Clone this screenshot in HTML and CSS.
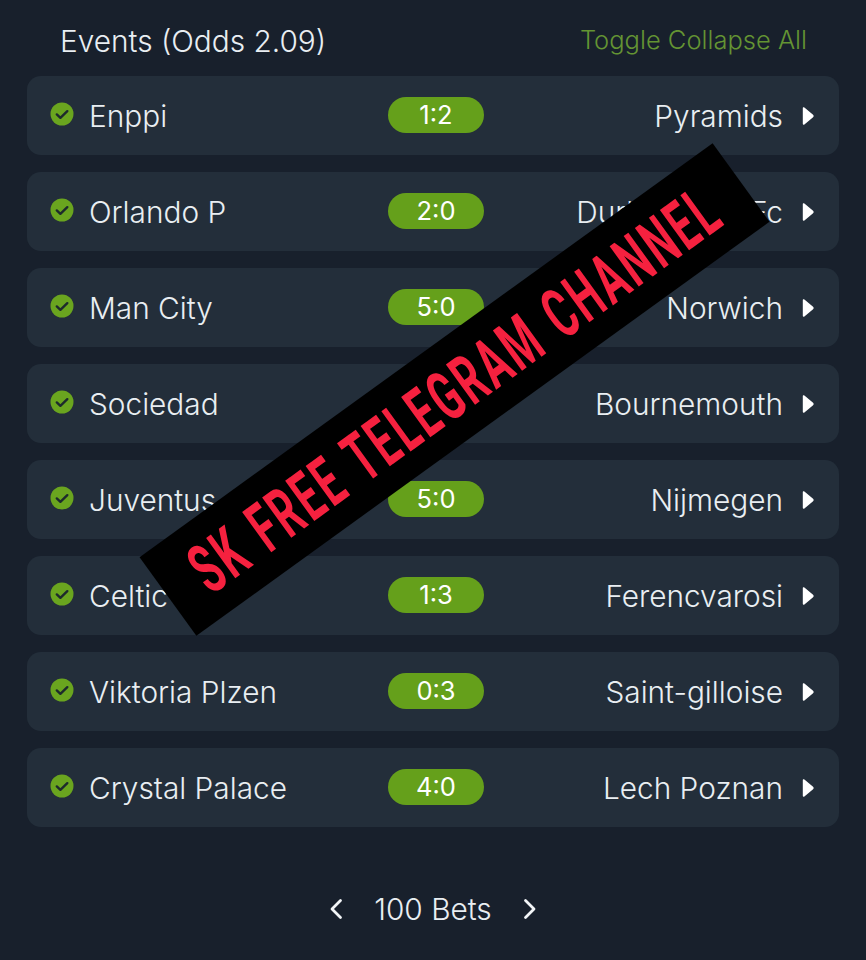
FILE: index.html
```html
<!DOCTYPE html>
<html lang="en">
<head>
    <meta charset="UTF-8">
    <meta name="viewport" content="width=device-width, initial-scale=1.0">
    <title>Events</title>
    <link rel="stylesheet" href="styles.css">
</head>
<body>
    <svg class="sprite" width="0" height="0">
        <symbol id="check" viewBox="0 0 24 24">
            <circle cx="12" cy="12" r="11.5" fill="#6aa51f"/>
            <path d="M6.8 12.4l3.6 3.4 6.9-6.6" fill="none" stroke="#1d2a2c" stroke-width="2.4" stroke-linecap="round" stroke-linejoin="round"/>
        </symbol>
        <symbol id="caret" viewBox="0 0 12 20">
            <path d="M2.4 1.4L10.8 8.6a1.8 1.8 0 0 1 0 2.8L2.4 18.6a1 1 0 0 1-1.6-.8V2.2a1 1 0 0 1 1.6-.8z" fill="#fff"/>
        </symbol>
    </svg>

    <div class="page">
        <header class="head">
            <h1>Events (Odds 2.09)</h1>
            <a class="toggle">Toggle Collapse All</a>
        </header>

        <div class="events">
            <div class="event">
                <svg class="check"><use href="#check"/></svg>
                <span class="home">Enppi</span>
                <span class="score">1:2</span>
                <span class="away">Pyramids</span>
                <svg class="caret"><use href="#caret"/></svg>
            </div>
            <div class="event">
                <svg class="check"><use href="#check"/></svg>
                <span class="home">Orlando P</span>
                <span class="score">2:0</span>
                <span class="away">Durban City Fc</span>
                <svg class="caret"><use href="#caret"/></svg>
            </div>
            <div class="event">
                <svg class="check"><use href="#check"/></svg>
                <span class="home">Man City</span>
                <span class="score">5:0</span>
                <span class="away">Norwich</span>
                <svg class="caret"><use href="#caret"/></svg>
            </div>
            <div class="event">
                <svg class="check"><use href="#check"/></svg>
                <span class="home">Sociedad</span>
                <span class="score">2:0</span>
                <span class="away">Bournemouth</span>
                <svg class="caret"><use href="#caret"/></svg>
            </div>
            <div class="event">
                <svg class="check"><use href="#check"/></svg>
                <span class="home">Juventus</span>
                <span class="score">5:0</span>
                <span class="away">Nijmegen</span>
                <svg class="caret"><use href="#caret"/></svg>
            </div>
            <div class="event">
                <svg class="check"><use href="#check"/></svg>
                <span class="home">Celtic</span>
                <span class="score">1:3</span>
                <span class="away">Ferencvarosi</span>
                <svg class="caret"><use href="#caret"/></svg>
            </div>
            <div class="event">
                <svg class="check"><use href="#check"/></svg>
                <span class="home">Viktoria Plzen</span>
                <span class="score">0:3</span>
                <span class="away">Saint-gilloise</span>
                <svg class="caret"><use href="#caret"/></svg>
            </div>
            <div class="event">
                <svg class="check"><use href="#check"/></svg>
                <span class="home">Crystal Palace</span>
                <span class="score">4:0</span>
                <span class="away">Lech Poznan</span>
                <svg class="caret"><use href="#caret"/></svg>
            </div>
        </div>

        <nav class="pager">
            <svg class="chevron" viewBox="0 0 14 22"><path d="M11.5 2.5L3 11l8.5 8.5"/></svg>
            <span>100 Bets</span>
            <svg class="chevron" viewBox="0 0 14 22"><path d="M2.5 2.5L11 11l-8.5 8.5"/></svg>
        </nav>
    </div>

    <div class="banner"><span>SK FREE TELEGRAM CHANNEL</span></div>
</body>
</html>
```

FILE: styles.css
```css
body {
    margin: 0;
    background: #18202c;
    color: #e9eef2;
    font-family: Inter, "Noto Sans", sans-serif;
    font-weight: 300;
    overflow: hidden;
}

.sprite {
    display: block;
}

.page {
    width: 866px;
    height: 960px;
    padding: 0 27px 0 27px;
    box-sizing: border-box;
}

.head {
    height: 76px;
    padding: 5px 32px 0 33px;
    display: flex;
    align-items: center;
    justify-content: space-between;
    box-sizing: border-box;
}

h1 {
    margin: 0;
    font-size: 29.8px;
    font-weight: 300;
}

.toggle {
    font-size: 25.5px;
    color: #649433;
    margin-top: -2px;
}

.events {
    display: flex;
    flex-direction: column;
    gap: 17px;
}

.event {
    height: 79px;
    background: #232e3a;
    border-radius: 14px;
    padding: 0 25px 0 23px;
    display: grid;
    grid-template-columns: 24px 314px 96px 1fr 12px;
    align-items: center;
    font-size: 29.8px;
}

.check {
    width: 24px;
    height: 24px;
    margin-top: -3px;
}

.home {
    padding-left: 15px;
    white-space: nowrap;
}

.score {
    height: 36px;
    line-height: 36px;
    margin-top: -1px;
    background: #65a01b;
    border-radius: 18px;
    color: #fff;
    font-size: 25.5px;
    font-weight: 400;
    text-align: center;
}

.away {
    text-align: right;
    padding-right: 19px;
    white-space: nowrap;
}

.caret {
    width: 12px;
    height: 20px;
}

.pager {
    margin-top: 64px;
    display: flex;
    justify-content: center;
    align-items: center;
    gap: 31px;
    font-size: 29.8px;
}

.chevron {
    width: 14px;
    height: 22px;
    fill: none;
    stroke: #f2f5f7;
    stroke-width: 2.8;
    stroke-linecap: round;
    stroke-linejoin: round;
}

/* watermark sits over the list */
.banner {
    position: absolute;
    left: 101px;
    top: 341px;
    width: 707px;
    height: 97px;
    background: #000;
    transform: rotate(-35.85deg);
    display: flex;
    align-items: center;
    justify-content: center;
}

.banner span {
    flex: none;
    color: #f5213f;
    font-family: Roboto, "Liberation Sans", sans-serif;
    font-size: 70px;
    font-weight: 700;
    letter-spacing: 5px;
    word-spacing: 6px;
    white-space: nowrap;
    transform: scaleX(0.57);
}
```
